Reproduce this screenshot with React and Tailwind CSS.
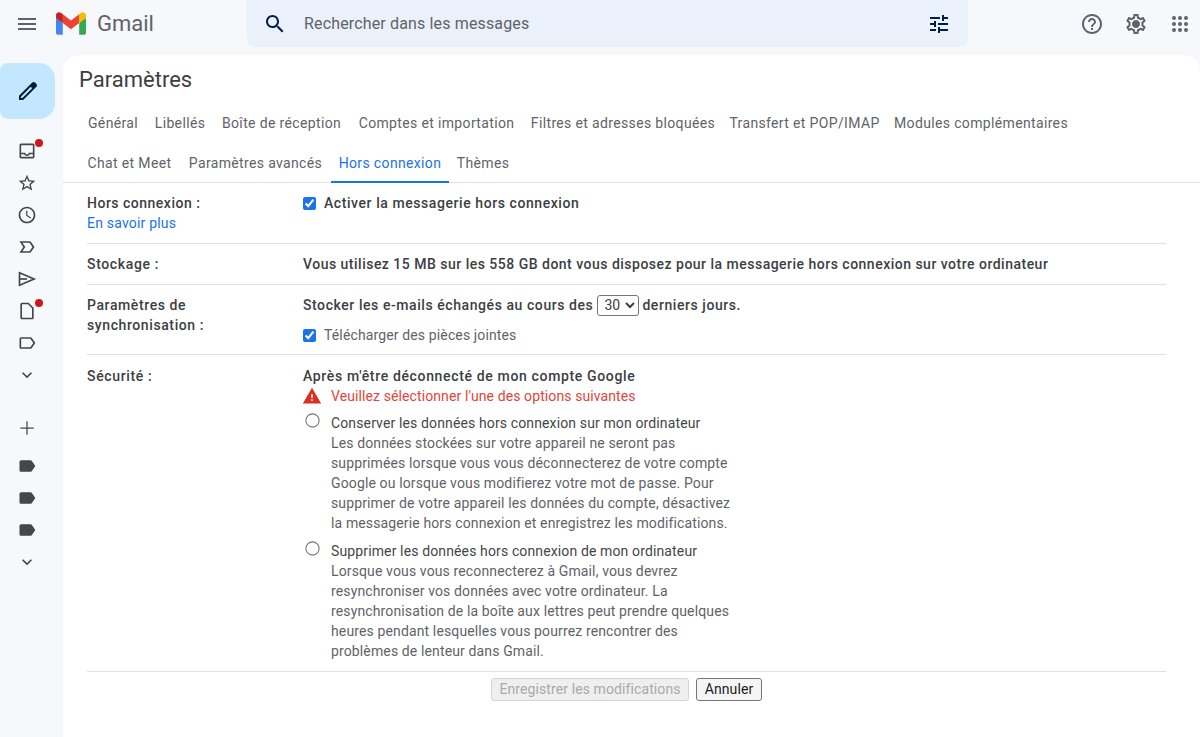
import React from 'react';

const paths = {
  menu: 'M3 18h18v-2H3v2zm0-5h18v-2H3v2zm0-7v2h18V6H3z',
  search: 'M15.5 14h-.79l-.28-.27C15.41 12.59 16 11.11 16 9.5 16 5.91 13.09 3 9.5 3S3 5.91 3 9.5 5.91 16 9.5 16c1.61 0 3.09-.59 4.23-1.57l.27.28v.79l5 4.99L20.49 19l-4.99-5zm-6 0C7.01 14 5 11.99 5 9.5S7.01 5 9.5 5 14 7.01 14 9.5 11.99 14 9.5 14z',
  tune: 'M3 17v2h6v-2H3zM3 5v2h10V5H3zm10 16v-2h8v-2h-8v-2h-2v6h2zM7 9v2H3v2h4v2h2V9H7zm14 4v-2H11v2h10zm-6-4h2V7h4V5h-4V3h-2v6z',
  help: 'M11 18h2v-2h-2v2zm1-16C6.48 2 2 6.48 2 12s4.48 10 10 10 10-4.48 10-10S17.52 2 12 2zm0 18c-4.41 0-8-3.59-8-8s3.59-8 8-8 8 3.59 8 8-3.59 8-8 8zm0-14c-2.21 0-4 1.79-4 4h2c0-1.1.9-2 2-2s2 .9 2 2c0 2-3 1.75-3 5h2c0-2.25 3-2.5 3-5 0-2.21-1.79-4-4-4z',
  gear: 'M19.43 12.98c.04-.32.07-.64.07-.98 0-.34-.03-.66-.07-.98l2.11-1.65c.19-.15.24-.42.12-.64l-2-3.46c-.09-.16-.26-.25-.44-.25-.06 0-.12.01-.17.03l-2.49 1c-.52-.4-1.08-.73-1.69-.98l-.38-2.65C14.46 2.18 14.25 2 14 2h-4c-.25 0-.46.18-.49.42l-.38 2.65c-.61.25-1.17.59-1.69.98l-2.49-1c-.06-.02-.12-.03-.18-.03-.17 0-.34.09-.43.25l-2 3.46c-.13.22-.07.49.12.64l2.11 1.65c-.04.32-.07.65-.07.98 0 .33.03.66.07.98l-2.11 1.65c-.19.15-.24.42-.12.64l2 3.46c.09.16.26.25.44.25.06 0 .12-.01.17-.03l2.49-1c.52.4 1.08.73 1.69.98l.38 2.65c.03.24.24.42.49.42h4c.25 0 .46-.18.49-.42l.38-2.65c.61-.25 1.17-.59 1.69-.98l2.49 1c.06.02.12.03.18.03.17 0 .34-.09.43-.25l2-3.46c.12-.22.07-.49-.12-.64l-2.11-1.65zm-1.98-1.71c.04.31.05.52.05.73 0 .21-.02.43-.05.73l-.14 1.13.89.7 1.08.84-.7 1.21-1.27-.51-1.04-.42-.9.68c-.43.32-.84.56-1.25.73l-1.06.43-.16 1.13-.2 1.35h-1.4l-.19-1.35-.16-1.13-1.06-.43c-.43-.18-.83-.41-1.23-.71l-.91-.7-1.06.43-1.27.51-.7-1.21 1.08-.84.89-.7-.14-1.13c-.03-.31-.05-.54-.05-.74s.02-.43.05-.73l.14-1.13-.89-.7-1.08-.84.7-1.21 1.27.51 1.04.42.9-.68c.43-.32.84-.56 1.25-.73l1.06-.43.16-1.13.2-1.35h1.39l.19 1.35.16 1.13 1.06.43c.43.18.83.41 1.23.71l.91.7 1.06-.43 1.27-.51.7 1.21-1.07.85-.89.7.14 1.13zM12 8c-2.21 0-4 1.79-4 4s1.79 4 4 4 4-1.79 4-4-1.79-4-4-4z',
  pencil: 'M20.41 4.94l-1.35-1.35c-.78-.78-2.05-.78-2.83 0L3 16.82V21h4.18L20.41 7.77c.79-.78.79-2.05 0-2.83zm-14 14.12L5 19v-1.36l9.82-9.82 1.41 1.41-9.82 9.83z',
  inbox: 'M19 3H5c-1.1 0-2 .9-2 2v14c0 1.1.9 2 2 2h14c1.1 0 2-.9 2-2V5c0-1.1-.9-2-2-2zm0 16H5v-3h3.56c.69 1.19 1.97 2 3.44 2s2.75-.81 3.44-2H19v3zm0-5h-4.99c0 1.1-.9 2-2.01 2s-2-.9-2-2H5V5h14v9z',
  star: 'M22 9.24l-7.19-.62L12 2 9.19 8.63 2 9.24l5.46 4.73L5.82 21 12 17.27 18.18 21l-1.63-7.03L22 9.24zM12 15.4l-3.76 2.27 1-4.28-3.32-2.88 4.38-.38L12 6.1l1.71 4.04 4.38.38-3.32 2.88 1 4.28L12 15.4z',
  clock: 'M11.99 2C6.47 2 2 6.48 2 12s4.47 10 9.99 10C17.52 22 22 17.52 22 12S17.52 2 11.99 2zM12 20c-4.42 0-8-3.58-8-8s3.58-8 8-8 8 3.58 8 8-3.58 8-8 8zM12.5 7H11v6l5.25 3.15.75-1.23-4.5-2.67z',
  important: 'M15 19H3l4.5-7L3 5h12c.65 0 1.26.31 1.63.84L21 12l-4.37 6.16c-.37.52-.98.84-1.63.84zm-8.5-2H15l3.5-5L15 7H6.5l3.5 5-3.5 5z',
  draft: 'M14 2H6c-1.1 0-2 .9-2 2v16c0 1.1.9 2 2 2h12c1.1 0 2-.9 2-2V8l-6-6zm4 18H6V4h7.17L18 8.83V20z',
  label: 'M17.63 5.84C17.27 5.33 16.67 5 16 5L5 5.01C3.9 5.01 3 5.9 3 7v10c0 1.1.9 1.99 2 1.99L16 19c.67 0 1.27-.33 1.63-.84L22 12l-4.37-6.16zM16 17H5V7h11l3.55 5L16 17z',
  labelFull: 'M17.63 5.84C17.27 5.33 16.67 5 16 5L5 5.01C3.9 5.01 3 5.9 3 7v10c0 1.1.9 1.99 2 1.99L16 19c.67 0 1.27-.33 1.63-.84L22 12l-4.37-6.16z',
  chevron: 'M7.41 8.59L12 13.17l4.59-4.58L18 10l-6 6-6-6z',
  plus: 'M20 12.75h-7.25V20h-1.5v-7.25H4v-1.5h7.25V4h1.5v7.25H20z',
  warning: 'M1 21h22L12 2 1 21zm12-3h-2v-2h2v2zm0-4h-2v-4h2v4z',
};

const Icon = ({ name, className }) => (
  <svg viewBox="0 0 24 24" fill="currentColor" className={className}><path d={paths[name]} /></svg>
);

const SendIcon = () => (
  <svg viewBox="0 0 24 24" fill="none" stroke="currentColor" strokeWidth="2" className="w-5 h-5 text-[#444746]">
    <path d="M3 4.5 20.5 12 3 19.5V4.5Z" />
    <path d="M3 12h9" />
  </svg>
);

const GmailLogo = () => (
  <svg viewBox="0 0 256 193" className="w-[30px] h-[23px] shrink-0">
    <path fill="#4285F4" d="M58.182 192.05V93.14L27.507 65.077 0 49.504v125.091c0 9.658 7.825 17.455 17.455 17.455h40.727Z" />
    <path fill="#34A853" d="M197.818 192.05h40.727c9.659 0 17.455-7.826 17.455-17.455V49.505l-31.156 17.837-27.026 25.798v98.91Z" />
    <path fill="#EA4335" d="m58.182 93.14-4.174-38.647 4.174-36.989L128 69.868l69.818-52.364 4.67 34.992-4.67 40.644L128 145.504z" />
    <path fill="#FBBC04" d="M197.818 17.504V93.14L256 49.504V26.231c0-21.585-24.64-33.89-41.89-20.945l-16.292 12.218Z" />
    <path fill="#C5221F" d="m0 49.504 26.759 20.07L58.182 93.14V17.504L41.89 5.286C24.61-7.66 0 4.646 0 26.23v23.273Z" />
  </svg>
);

const AppsIcon = () => (
  <svg viewBox="0 0 24 24" fill="currentColor" className="w-6 h-6">
    {[6, 12, 18].map(y => [6, 12, 18].map(x => <circle key={`${x}-${y}`} cx={x} cy={y} r="2" />))}
  </svg>
);

const SideItem = ({ name, dot, children }) => (
  <div className="relative w-[54px] h-8 flex items-center justify-center">
    {children || <Icon name={name} className="w-5 h-5 text-[#444746]" />}
    {dot && <span className="absolute left-[35px] top-[4px] w-2 h-2 rounded-full bg-[#d0161b]" />}
  </div>
);

const row1 = [
  ['Général', 'w-[68px]'],
  ['Libellés', 'w-[66px]'],
  ['Boîte de réception', 'w-[137px]'],
  ['Comptes et importation', 'w-[173px]'],
  ['Filtres et adresses bloquées', 'w-[200px]'],
  ['Transfert et POP/IMAP', 'w-[163px]'],
  ['Modules complémentaires', 'w-[190px]'],
];
const row2 = [
  ['Chat et Meet', 'w-[101px]'],
  ['Paramètres avancés', 'w-[151px]'],
  ['Hors connexion', 'w-[118px]'],
  ['Thèmes', 'w-[68px]'],
];

const Tab = ({ label, width }) => {
  const active = label === 'Hors connexion';
  return (
    <div className={`${width} h-10 flex items-center justify-center whitespace-nowrap tracking-[0.35px] border-y-2 border-t-transparent ${active ? 'text-[#1a73e8] border-b-[#1a73e8]' : 'text-[#5f6368] border-b-transparent'}`}>
      {label}
    </div>
  );
};

const Option = ({ title, lines }) => (
  <div className="flex">
    <input type="radio" name="secu" className="w-[13px] h-[13px] mt-[1px] ml-[3px] mr-3 scale-110 shrink-0" />
    <div className="text-[#5f6368] tracking-[0.13px]">
      <div className="text-[#444746]">{title}</div>
      {lines.map(l => <div key={l}>{l}</div>)}
    </div>
  </div>
);

export default function App() {
  return (
    <div className="h-[737px] overflow-hidden bg-[#f6f8fc] flex flex-col text-[14px] leading-5 tracking-[0.2px] text-[#3c4043] font-['Roboto',sans-serif]">
      {/* Top bar */}
      <header className="h-[55px] shrink-0 flex items-start">
        <div className="w-[247px] h-[47px] flex items-center shrink-0">
          <div className="w-[54px] flex justify-center"><Icon name="menu" className="w-6 h-6 text-[#5f6368]" /></div>
          <div className="ml-0.5"><GmailLogo /></div>
          <span className="ml-[11px] text-[22px] tracking-normal text-[#5f6368]">Gmail</span>
        </div>
        <div className="w-[721px] h-[47px] rounded-b-lg bg-[#eaf1fb] flex items-center pl-4 pr-[17px]">
          <Icon name="search" className="w-6 h-6 text-[#041e49]" />
          <span className="ml-[17px] flex-1 text-[16px] tracking-[0.15px] text-[#5f6368]">Rechercher dans les messages</span>
          <Icon name="tune" className="w-6 h-6 text-[#041e49]" />
        </div>
        <div className="flex-1 h-[47px] flex items-center pl-[112px] gap-5 text-[#5f6368]">
          <Icon name="help" className="w-6 h-6" />
          <Icon name="gear" className="w-6 h-6" />
          <AppsIcon />
        </div>
      </header>

      <div className="flex flex-1 min-h-0">
        {/* Sidebar */}
        <aside className="w-[63px] shrink-0">
          <div className="mt-2 w-[55px] h-14 rounded-r-2xl rounded-l-lg bg-[#c2e7ff] flex items-center justify-center">
            <Icon name="pencil" className="w-6 h-6 text-[#001d35]" />
          </div>
          <div className="mt-4">
            <SideItem name="inbox" dot />
            <SideItem name="star" />
            <SideItem name="clock" />
            <SideItem name="important" />
            <SideItem><SendIcon /></SideItem>
            <SideItem name="draft" dot />
            <SideItem name="label" />
            <SideItem name="chevron" />
          </div>
          <div className="mt-[21px]"><SideItem name="plus" /></div>
          <div className="mt-1.5">
            <SideItem name="labelFull" />
            <SideItem name="labelFull" />
            <SideItem name="labelFull" />
            <SideItem name="chevron" />
          </div>
        </aside>

        {/* Settings panel */}
        <main className="flex-1 bg-white rounded-t-2xl">
          <h1 className="h-12 pl-4 pt-0.5 flex items-center text-[22px] tracking-normal font-normal text-[#3c4043]">Paramètres</h1>
          <div className="border-b border-[#e0e0e0] pl-4">
            <div className="flex">{row1.map(([t, w]) => <Tab key={t} label={t} width={w} />)}</div>
            <div className="flex -mb-px">{row2.map(([t, w]) => <Tab key={t} label={t} width={w} />)}</div>
          </div>

          <div className="pl-6 pr-[34px]">
            <div className="flex py-2.5 border-b border-[#e0e0e0] h-[61px]">
              <div className="w-[216px] shrink-0">
                <div className="font-medium tracking-[0.5px]">Hors connexion :</div>
                <div className="text-[#1a73e8]">En savoir plus</div>
              </div>
              <label className="flex items-start font-medium tracking-[0.57px]">
                <input type="checkbox" defaultChecked className="w-[13px] h-[13px] mt-[4px] mr-2 accent-[#1a73e8]" />
                Activer la messagerie hors connexion
              </label>
            </div>

            <div className="flex py-2.5 border-b border-[#e0e0e0] h-[41px]">
              <div className="w-[216px] shrink-0 font-medium tracking-[0.65px]">Stockage :</div>
              <div className="font-medium tracking-[0.49px]">Vous utilisez 15 MB sur les 558 GB dont vous disposez pour la messagerie hors connexion sur votre ordinateur</div>
            </div>

            <div className="flex pt-2.5 border-b border-[#e0e0e0] h-[70px]">
              <div className="w-[216px] shrink-0 font-medium tracking-[0.6px]">Paramètres de<br />synchronisation :</div>
              <div>
                <div className="font-medium tracking-[0.57px] flex items-center h-5">
                  Stocker les e-mails échangés au cours des
                  <select className="ml-1 mr-[3px] w-[42px] h-[21px] border border-[#767676] rounded-[3px] font-normal tracking-normal text-[14px] bg-white pl-[2px]">
                    <option>30</option>
                  </select>
                  derniers jours.
                </div>
                <label className="flex items-start mt-[10px] text-[#5f6368] tracking-[0.13px]">
                  <input type="checkbox" defaultChecked className="w-[13px] h-[13px] mt-[4px] mr-2 accent-[#1a73e8]" />
                  Télécharger des pièces jointes
                </label>
              </div>
            </div>

            <div className="flex pt-[11px] border-b border-[#e0e0e0] h-[317px]">
              <div className="w-[216px] shrink-0 font-medium tracking-[0.65px]">Sécurité :</div>
              <div>
                <div className="font-medium tracking-[0.65px]">Après m'être déconnecté de mon compte Google</div>
                <div className="flex items-center text-[#e0453a] tracking-[0.1px]">
                  <Icon name="warning" className="w-5 h-5 -ml-px mr-[9px] text-[#d93025]" />
                  Veuillez sélectionner l'une des options suivantes
                </div>
                <div className="mt-[7px]">
                  <Option
                    title="Conserver les données hors connexion sur mon ordinateur"
                    lines={[
                      'Les données stockées sur votre appareil ne seront pas',
                      'supprimées lorsque vous vous déconnecterez de votre compte',
                      'Google ou lorsque vous modifierez votre mot de passe. Pour',
                      'supprimer de votre appareil les données du compte, désactivez',
                      'la messagerie hors connexion et enregistrez les modifications.',
                    ]}
                  />
                </div>
                <div className="mt-2">
                  <Option
                    title="Supprimer les données hors connexion de mon ordinateur"
                    lines={[
                      'Lorsque vous vous reconnecterez à Gmail, vous devrez',
                      'resynchroniser vos données avec votre ordinateur. La',
                      'resynchronisation de la boîte aux lettres peut prendre quelques',
                      'heures pendant lesquelles vous pourrez rencontrer des',
                      'problèmes de lenteur dans Gmail.',
                    ]}
                  />
                </div>
              </div>
            </div>

            <div className="flex justify-center gap-[7px] pt-1.5 tracking-[0.1px]">
              <button disabled className="w-[198px] h-[23px] pb-0.5 border border-[#d4d4d4] rounded-[3px] bg-[#efefef] text-[#a9a9a9]">Enregistrer les modifications</button>
              <button className="w-[66px] h-[23px] pb-0.5 border border-[#767676] rounded-[3px] bg-[#f5f5f5] text-[#202124]">Annuler</button>
            </div>
          </div>
        </main>
      </div>
    </div>
  );
}
